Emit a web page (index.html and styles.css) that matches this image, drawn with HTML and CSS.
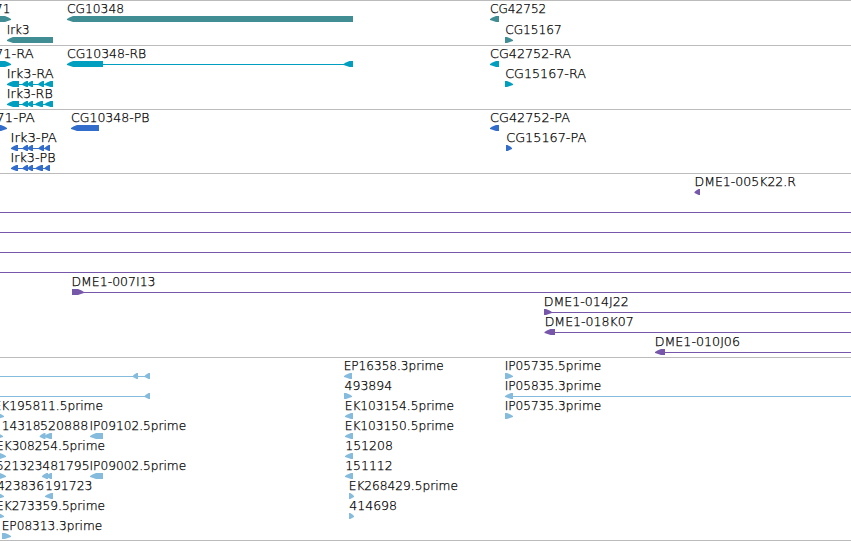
FILE: index.html
```
<!DOCTYPE html>
<html lang="en">

<head>
    <meta charset="UTF-8">
    <meta name="viewport" content="width=device-width, initial-scale=1.0">
    <title>Genome Browser Tracks</title>
    <link rel="stylesheet" href="styles.css">
</head>

<body>
    <main class="browser">
        <section class="track track-gene" id="genes"></section>
        <section class="track track-transcript" id="transcripts"></section>
        <section class="track track-protein" id="proteins"></section>
        <section class="track track-bac" id="bacs"></section>
        <section class="track track-insertion" id="insertions"></section>
    </main>
    <script src="tracks.js"></script>
</body>

</html>
```
FILE: styles.css
```
body {
    margin: 0;
    background-color: #fff;
    overflow: hidden;
}

.browser {
    display: flex;
    flex-direction: column;
    width: 851px;
    border-bottom: 1px solid #bbb;
}

.track {
    display: flex;
    flex-direction: column;
    border-top: 1px solid #bbb;
    padding-bottom: 3px;
}

.row {
    display: block;
    width: 851px;
    height: 20px;
    overflow: visible;
    fill: currentColor;
}

.label {
    font-family: "DejaVu Sans", sans-serif;
    font-size: 12px;
    font-weight: 200;
    fill: #000;
    stroke: #000;
    stroke-width: 0.25px;
}

.intron {
    shape-rendering: crispEdges;
}

.track-gene {
    color: #408e94;
    padding-bottom: 2px;
}

.track-gene .row {
    height: 21px;
}

.track-transcript {
    color: #009fc0;
}

.track-protein {
    color: #326dcc;
}

.track-bac {
    color: #7757a9;
}

.track-insertion {
    color: #85bbdc;
    padding-bottom: 2px;
}
```
FILE: tracks.js
```
// labels: [text, start, width]
// exons: [start, end, strand]
// introns: [start, end]
const tracks = {
    genes: [
        {
            labels: [['71', -5, 15.3], ['CG10348', 67, 57], ['CG42752', 490, 56.3]],
            exons: [[-20, 11, '+'], [67, 353, '-'], [490, 499, '-']]
        },
        {
            labels: [['Irk3', 6.7, 22.8], ['CG15167', 505.2, 56.5]],
            exons: [[7, 53, '-'], [505, 513, '+']]
        }
    ],
    transcripts: [
        {
            labels: [['71-RA', -5, 38.7], ['CG10348-RB', 67, 79.2], ['CG42752-RA', 490, 81]],
            exons: [[-20, 11, '+'], [67, 103, '-'], [343.5, 353, '-'], [490, 499, '-']],
            introns: [[103, 353]]
        },
        {
            labels: [['Irk3-RA', 6.7, 47], ['CG15167-RA', 505.2, 80.8]],
            exons: [[7, 19, '-'], [22, 28, '-'], [27, 33, '-'], [38, 44, '-'], [44.5, 53, '-'], [505, 513, '+']],
            introns: [[7, 53]]
        },
        {
            labels: [['Irk3-RB', 6.7, 46]],
            exons: [[7, 19, '-'], [22, 28, '-'], [27, 33, '-'], [35, 43, '-'], [44.5, 53, '-']],
            introns: [[7, 53]]
        }
    ],
    proteins: [
        {
            labels: [['71-PA', -4, 38.7], ['CG10348-PB', 71, 78.5], ['CG42752-PA', 490, 80]],
            exons: [[-20, 7, '+'], [71, 99, '-'], [490, 499, '-']]
        },
        {
            labels: [['Irk3-PA', 10.5, 46.3], ['CG15167-PA', 506.2, 80]],
            exons: [[11, 18, '-'], [22.5, 28, '-'], [27.5, 33, '-'], [38.5, 44, '-'], [44.5, 50, '-'], [506, 512, '+']],
            introns: [[11, 50]]
        },
        {
            labels: [['Irk3-PB', 10.5, 45]],
            exons: [[11, 18, '-'], [22.5, 28, '-'], [27.5, 33, '-'], [35.5, 43, '-'], [44.5, 50, '-']],
            introns: [[11, 50]]
        }
    ],
    bacs: [
        { labels: [['DME1-005K22.R', 694.5, 101.5]], exons: [[694.5, 700, '-']] },
        { introns: [[0, 851]] },
        { introns: [[0, 851]] },
        { introns: [[0, 851]] },
        { introns: [[0, 851]] },
        { labels: [['DME1-007I13', 71.5, 84]], exons: [[72, 84, '+']], introns: [[84, 851]] },
        { labels: [['DME1-014J22', 543.7, 85]], exons: [[544, 552, '+']], introns: [[552, 851]] },
        { labels: [['DME1-018K07', 544.7, 89]], exons: [[544.5, 555, '-']], introns: [[555, 851]] },
        { labels: [['DME1-010J06', 654.7, 85.3]], exons: [[655, 665, '-']], introns: [[665, 851]] }
    ],
    insertions: [
        {
            labels: [['EP16358.3prime', 343.7, 100], ['IP05735.5prime', 504.7, 96.5]],
            exons: [[132.7, 138, '-'], [144.5, 150, '-'], [344, 352, '-'], [505, 513, '+']],
            introns: [[0, 150]]
        },
        {
            labels: [['493894', 344.5, 47.7], ['IP05835.3prime', 504.7, 96.5]],
            exons: [[144.5, 150, '-'], [344, 352, '+'], [505, 513, '-']],
            introns: [[0, 150], [513, 851]]
        },
        {
            labels: [['EK195811.5prime', -6.5, 109.5], ['EK103154.5prime', 344.7, 109.3], ['IP05735.3prime', 504.7, 96.5]],
            exons: [[-4, 4, '+'], [345, 353, '-'], [505, 513, '+']]
        },
        {
            labels: [['14318', 1.8, 38.7], ['520888', 40, 48.2], ['IP09102.5prime', 89.5, 96.7], ['EK103150.5prime', 344.7, 109.3]],
            exons: [[-5, 3, '+'], [39.7, 45.5, '-'], [44, 52, '-'], [90, 103, '-'], [345, 353, '-']]
        },
        {
            labels: [['EK308254.5prime', -4, 109], ['151208', 345.2, 47.7]],
            exons: [[-5, 6, '+'], [345, 353, '-']]
        },
        {
            labels: [['521323', -4, 46.5], ['481795', 42.3, 47.2], ['IP09002.5prime', 89.5, 96.7], ['151112', 345.2, 47.5]],
            exons: [[-5, 6, '+'], [42, 48, '-'], [46, 52, '-'], [90, 103, '-'], [345, 353, '-']]
        },
        {
            labels: [['423836', -3, 47], ['191723', 45, 47.5], ['EK268429.5prime', 348.7, 109.3]],
            exons: [[-5, 4, '+'], [45, 53, '-'], [349, 354, '+']]
        },
        {
            labels: [['EK273359.5prime', -4, 109], ['414698', 349.2, 47.9]],
            exons: [[-5, 4, '+'], [349, 354, '+']]
        },
        { labels: [['EP08313.3prime', 1.7, 100.5]], exons: [[2, 11, '+']] }
    ]
};

// Box with a rounded point at the end that shows the strand
function exonPoints([start, end, strand]) {
    const head = Math.min(8, end - start);
    const tip = strand === '+' ? end : start;
    const back = strand === '+' ? start : end;
    const dir = strand === '+' ? -1 : 1;
    const neck = tip + dir * head * 0.75;
    const nose = tip + dir * head * 0.3;
    return `${back},15 ${neck},15 ${nose},16.5 ${tip},18 ${tip},19 ${nose},19.8 ${neck},21 ${back},21`;
}

Object.keys(tracks).forEach(id => {
    document.getElementById(id).innerHTML = tracks[id].map(({ labels = [], exons = [], introns = [] }) => `
        <svg class="row">
            ${introns.map(([start, end]) => `<rect class="intron" x="${start}" y="18" width="${end - start}" height="1"/>`).join('')}
            ${exons.map(exon => `<polygon points="${exonPoints(exon)}"/>`).join('')}
            ${labels.map(([text, x, width]) => `<text class="label" x="${x}" y="12" textLength="${width}" lengthAdjust="spacingAndGlyphs">${text}</text>`).join('')}
        </svg>`).join('');
});
```
